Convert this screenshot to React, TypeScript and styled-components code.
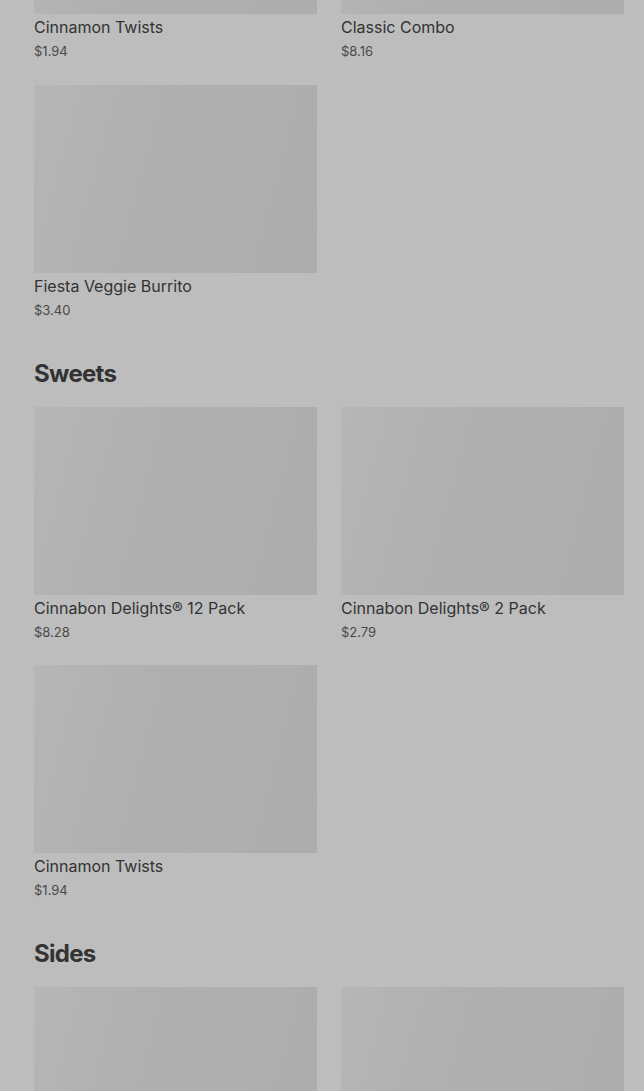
import styled, { createGlobalStyle } from 'styled-components';

const GlobalStyle = createGlobalStyle`
  html, body {
    margin: 0;
    padding: 0;
    background: #bdbdbd;
    font-family: 'Inter', 'Roboto', sans-serif;
    overflow: hidden;
  }
`;

const Page = styled.div`
  width: 644px;
  height: 1091px;
  overflow: hidden;
  background: #bdbdbd;
`;

const Content = styled.div`
  margin-top: -174px;
  padding: 0 20px 0 34px;
`;

const Section = styled.section`
  margin-bottom: 38.5px;
`;

const Heading = styled.h2`
  margin: 0 0 17px;
  font-size: 24px;
  line-height: 32px;
  font-weight: 700;
  color: #333333;
  letter-spacing: -0.7px;
`;

const Grid = styled.div`
  display: grid;
  grid-template-columns: 283px 283px;
  column-gap: 24px;
  row-gap: 24px;
`;

const Card = styled.div`
  display: flex;
  flex-direction: column;
  padding-bottom: 0.5px;
`;

const Thumb = styled.div`
  height: 188px;
  background: linear-gradient(105deg, #b6b6b6 0%, #b0b0b0 35%, #adadad 100%);
`;

const Title = styled.div`
  margin-top: 2px;
  font-size: 16px;
  line-height: 22px;
  font-weight: 400;
  color: #333333;
`;

const Price = styled.div`
  margin-top: 4px;
  font-size: 13px;
  line-height: 18px;
  color: #4a4a4a;
`;

interface IItem {
  name?: string;
  price?: string;
}

interface ISection {
  title?: string;
  items: IItem[];
}

const sections: ISection[] = [
  {
    items: [
      { name: 'Cinnamon Twists', price: '$1.94' },
      { name: 'Classic Combo', price: '$8.16' },
      { name: 'Fiesta Veggie Burrito', price: '$3.40' },
    ],
  },
  {
    title: 'Sweets',
    items: [
      { name: 'Cinnabon Delights® 12 Pack', price: '$8.28' },
      { name: 'Cinnabon Delights® 2 Pack', price: '$2.79' },
      { name: 'Cinnamon Twists', price: '$1.94' },
    ],
  },
  {
    // only the top of these cards is in view
    title: 'Sides',
    items: [{}, {}],
  },
];

const App = () => {
  return (
    <Page>
      <GlobalStyle />
      <Content>
        {sections.map((section, i) => (
          <Section key={i}>
            {section.title && <Heading>{section.title}</Heading>}
            <Grid>
              {section.items.map((item, j) => (
                <Card key={j}>
                  <Thumb />
                  {item.name && <Title>{item.name}</Title>}
                  {item.price && <Price>{item.price}</Price>}
                </Card>
              ))}
            </Grid>
          </Section>
        ))}
      </Content>
    </Page>
  );
};

export default App;
